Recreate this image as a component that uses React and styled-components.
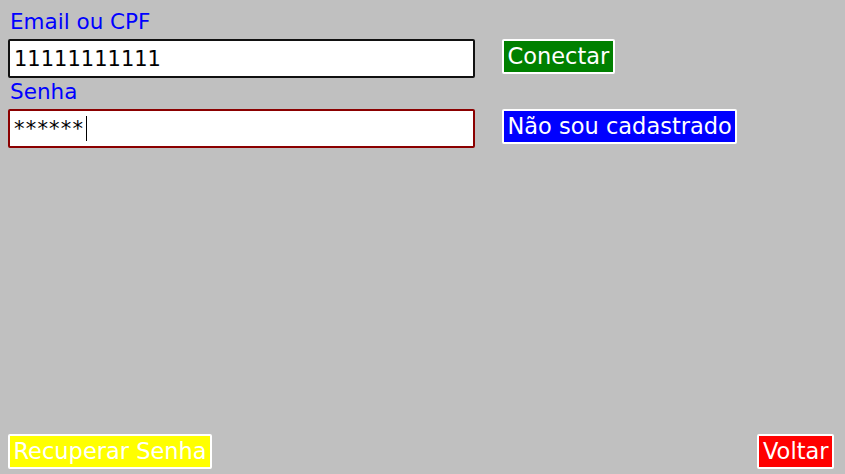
import React from "react";
import styled, { createGlobalStyle } from "styled-components";

const Global = createGlobalStyle`
  html, body {
    margin: 0;
    padding: 0;
    height: 100%;
    background: #c0c0c0;
    font-family: "DejaVu Sans", "Liberation Sans", sans-serif;
  }
  #root {
    height: 100%;
  }
`;

const Screen = styled.div`
  box-sizing: border-box;
  height: 100%;
  display: flex;
  flex-direction: column;
  justify-content: space-between;
  padding: 8px 11px 5px 8px;
`;

const Form = styled.div`
  display: grid;
  grid-template-columns: 467px auto;
  grid-template-rows: 31px 39px 31px 39px;
  column-gap: 27px;
  align-items: start;
  justify-items: start;
`;

const Label = styled.div`
  grid-column: 1;
  grid-row: ${(p) => p.$row};
  box-sizing: border-box;
  height: 31px;
  padding-left: 2px;
  font-size: 21.5px;
  line-height: 28px;
  color: #0000ff;
`;

const Field = styled.div`
  grid-column: 1;
  grid-row: ${(p) => p.$row};
  box-sizing: border-box;
  width: 467px;
  height: 39px;
  display: flex;
  align-items: center;
  padding-left: 4px;
  background: #ffffff;
  border: 2px solid ${(p) => p.$border};
  border-radius: 2px;
  font-size: 21px;
  color: #000000;
  letter-spacing: ${(p) => p.$spacing || "0"};
`;

const Caret = styled.span`
  display: inline-block;
  width: 1px;
  height: 25px;
  margin-left: 2px;
  background: #000000;
`;

const Button = styled.button`
  box-sizing: border-box;
  height: 35px;
  padding: 0 3.5px;
  margin: 0;
  background: ${(p) => p.$bg};
  border: 2px solid #ffffff;
  border-radius: 2px;
  color: #ffffff;
  font-family: "DejaVu Sans", "Liberation Sans", sans-serif;
  font-size: 22.5px;
  line-height: 31px;
  white-space: nowrap;
  cursor: pointer;
  grid-column: ${(p) => p.$col || "auto"};
  grid-row: ${(p) => p.$row || "auto"};
`;

const BottomBar = styled.div`
  display: flex;
  justify-content: space-between;
  align-items: flex-end;
`;

export default function App() {
  return (
    <>
      <Global />
      <Screen>
        <Form>
          <Label $row={1}>Email ou CPF</Label>
          <Field $row={2} $border="#111111">
            11111111111
          </Field>
          <Button $bg="#008000" $col={2} $row={2}>
            Conectar
          </Button>
          <Label $row={3}>Senha</Label>
          <Field $row={4} $border="#8b0000" $spacing="1.2px">
            ******
            <Caret />
          </Field>
          <Button $bg="#0000ff" $col={2} $row={4}>
            Não sou cadastrado
          </Button>
        </Form>
        <BottomBar>
          <Button $bg="#ffff00">Recuperar Senha</Button>
          <Button $bg="#ff0000">Voltar</Button>
        </BottomBar>
      </Screen>
    </>
  );
}
